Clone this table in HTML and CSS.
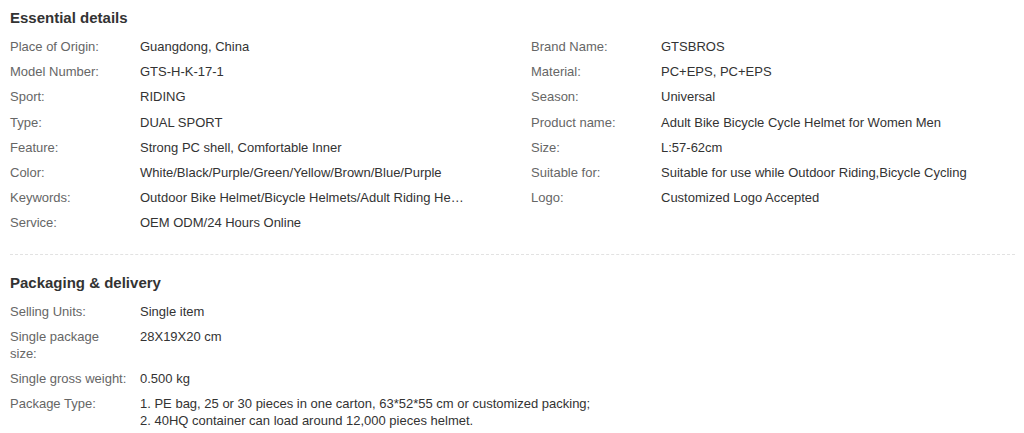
FILE: index.html
```html
<!DOCTYPE html>
<html>
<head>
<meta charset="utf-8">
<link rel="stylesheet" href="styles.css">
</head>
<body>
<div class="page">
  <section class="section first">
    <h2 class="title">Essential details</h2>
    <div class="grid">
      <div class="col">
        <div class="row"><div class="label">Place of Origin:</div><div class="value">Guangdong, China</div></div>
        <div class="row"><div class="label">Model Number:</div><div class="value">GTS-H-K-17-1</div></div>
        <div class="row"><div class="label">Sport:</div><div class="value">RIDING</div></div>
        <div class="row"><div class="label">Type:</div><div class="value">DUAL SPORT</div></div>
        <div class="row"><div class="label">Feature:</div><div class="value">Strong PC shell, Comfortable Inner</div></div>
        <div class="row"><div class="label">Color:</div><div class="value">White/Black/Purple/Green/Yellow/Brown/Blue/Purple</div></div>
        <div class="row"><div class="label">Keywords:</div><div class="value ellipsis" title="Outdoor Bike Helmet/Bicycle Helmets/Adult Riding Helmet">Outdoor Bike Helmet/Bicycle Helmets/Adult Riding He…</div></div>
        <div class="row"><div class="label">Service:</div><div class="value">OEM ODM/24 Hours Online</div></div>
      </div>
      <div class="col">
        <div class="row"><div class="label">Brand Name:</div><div class="value">GTSBROS</div></div>
        <div class="row"><div class="label">Material:</div><div class="value">PC+EPS, PC+EPS</div></div>
        <div class="row"><div class="label">Season:</div><div class="value">Universal</div></div>
        <div class="row"><div class="label">Product name:</div><div class="value">Adult Bike Bicycle Cycle Helmet for Women Men</div></div>
        <div class="row"><div class="label">Size:</div><div class="value">L:57-62cm</div></div>
        <div class="row"><div class="label">Suitable for:</div><div class="value">Suitable for use while Outdoor Riding,Bicycle Cycling</div></div>
        <div class="row"><div class="label">Logo:</div><div class="value">Customized Logo Accepted</div></div>
      </div>
    </div>
  </section>
  <section class="section">
    <h2 class="title">Packaging &amp; delivery</h2>
    <div class="col">
      <div class="row"><div class="label">Selling Units:</div><div class="value">Single item</div></div>
      <div class="row"><div class="label">Single package size:</div><div class="value">28X19X20 cm</div></div>
      <div class="row"><div class="label">Single gross weight:</div><div class="value">0.500 kg</div></div>
      <div class="row"><div class="label">Package Type:</div><div class="value wide">1. PE bag, 25 or 30 pieces in one carton, 63*52*55 cm or customized packing;<br>2. 40HQ container can load around 12,000 pieces helmet.</div></div>
    </div>
  </section>
</div>
</body>
</html>
```

FILE: styles.css
```css
html, body {
  margin: 0;
  padding: 0;
  background: #fff;
}
body {
  font-family: "Liberation Sans", Arial, sans-serif;
  font-size: 13px;
  color: #333;
}
.page {
  padding: 0 9px 0 10px;
}
.section {
  padding-top: 8px;
}
.section.first {
  padding-bottom: 18px;
  border-bottom: 1px dashed #e2e2e2;
}
.section + .section {
  padding-top: 18px;
}
.title {
  margin: 0 0 6px;
  font-size: 15px;
  line-height: 20px;
  font-weight: bold;
  color: #333;
}
.grid {
  display: grid;
  grid-template-columns: 521px 1fr;
}
.col {
  display: flex;
  flex-direction: column;
}
.row {
  display: flex;
  padding: 4.1px 0;
  line-height: 17px;
}
.label {
  flex: 0 0 117px;
  margin-right: 13px;
  color: #666;
}
.value {
  color: #333;
}
.ellipsis {
  white-space: nowrap;
}
```
